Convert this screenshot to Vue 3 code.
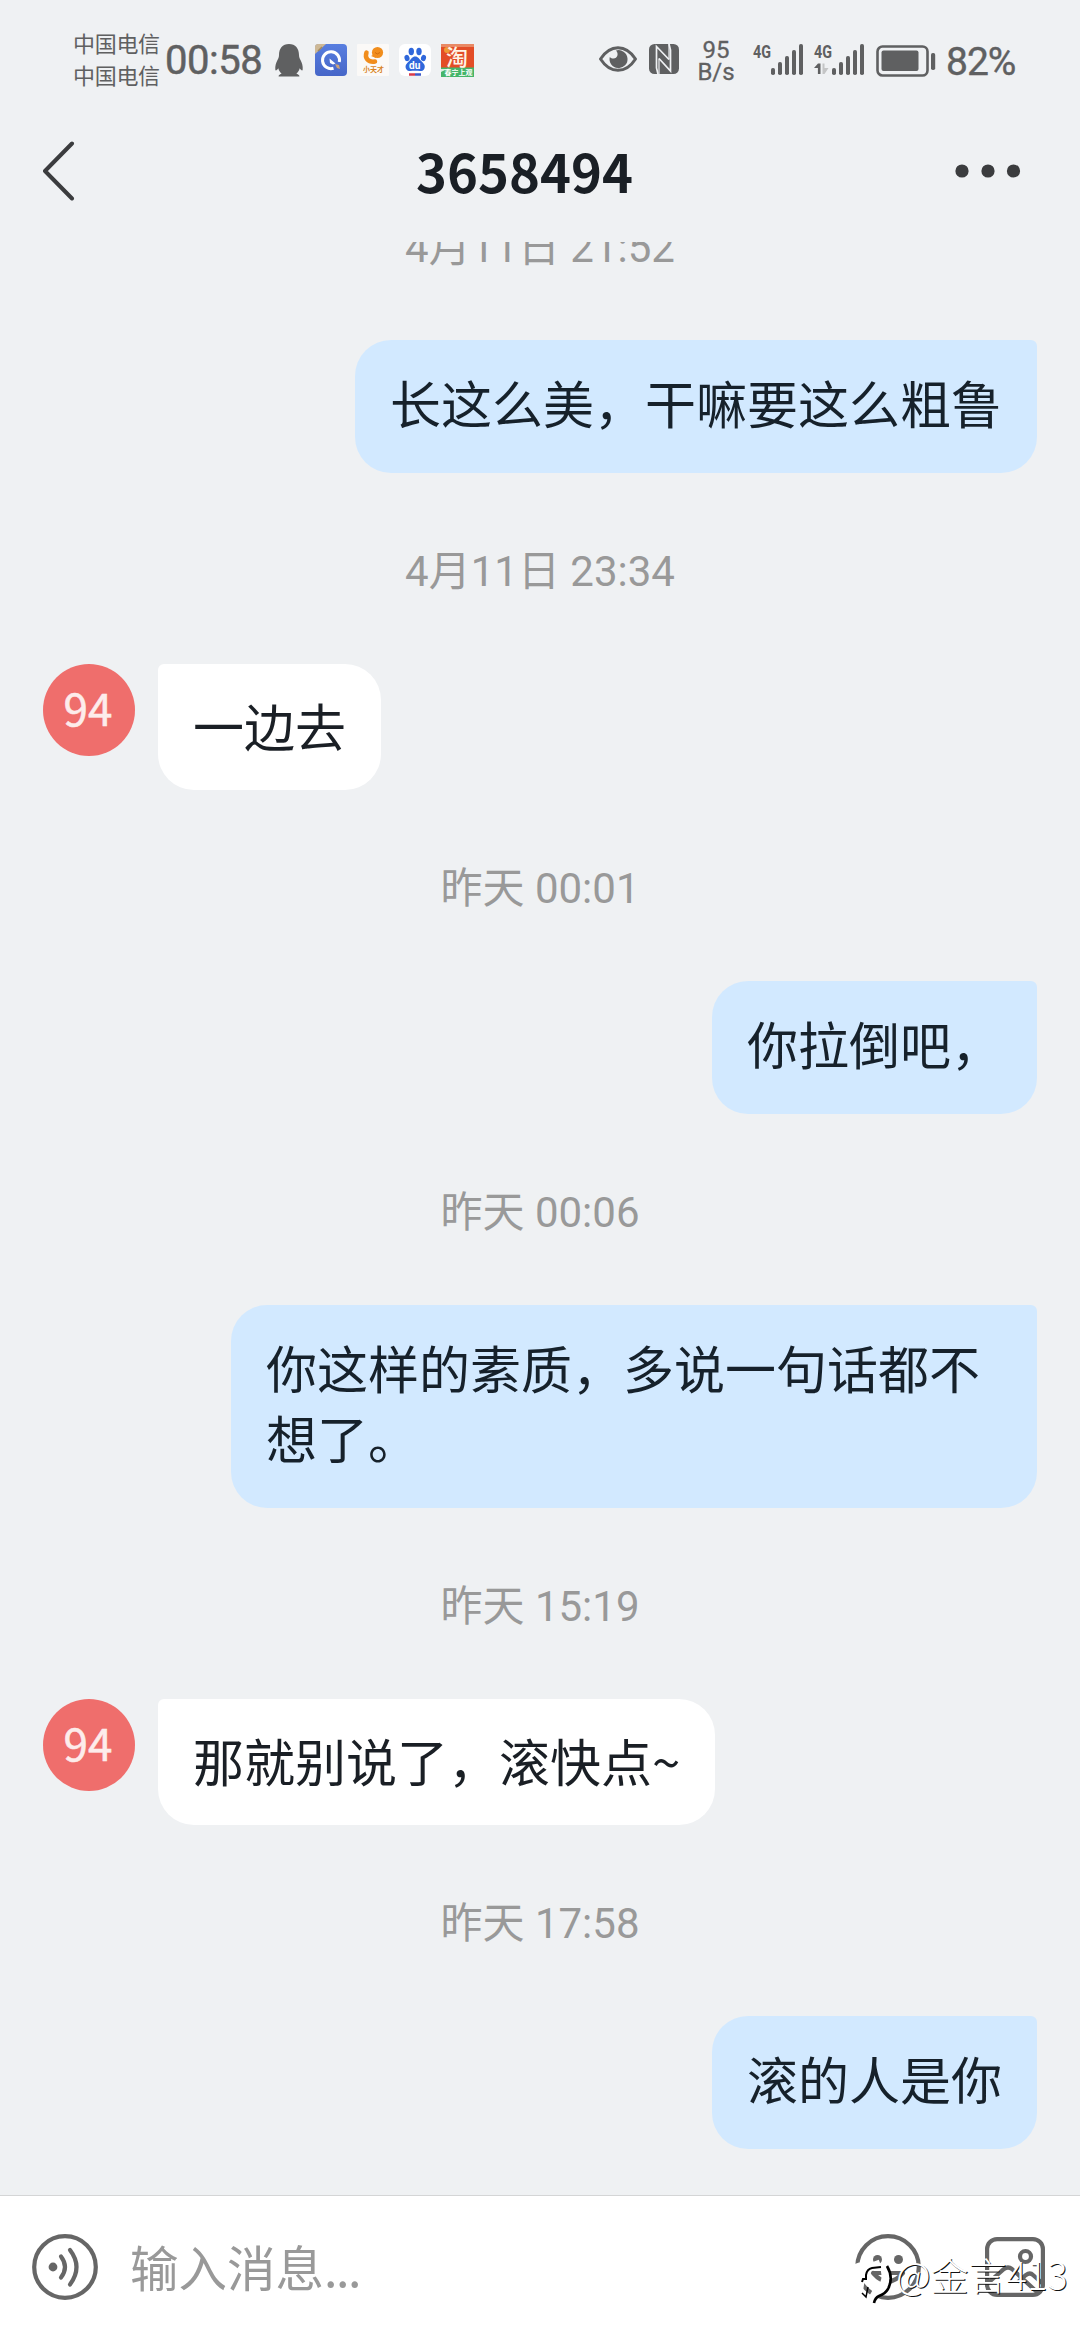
<script setup>
const messages = [
  { time: '4月11日 21:52', side: 'me', text: '长这么美，干嘛要这么粗鲁' },
  { time: '4月11日 23:34', side: 'peer', text: '一边去' },
  { time: '昨天 00:01', side: 'me', text: '你拉倒吧，' },
  { time: '昨天 00:06', side: 'me', text: '你这样的素质，多说一句话都不想了。' },
  { time: '昨天 15:19', side: 'peer', text: '那就别说了，滚快点~' },
  { time: '昨天 17:58', side: 'me', text: '滚的人是你' },
]
const bars = [0, 1, 2, 3, 4]
</script>

<template>
  <div class="phone" lang="zh-CN">
    <div class="status">
      <div class="carriers"><span>中国电信</span><span>中国电信</span></div>
      <span class="clock">00:58</span>
      <svg class="penguin" width="28" height="34" viewBox="0 0 28 34" fill="#5f6061">
        <path d="M14 0C7.500 0 4 4.500 4 11c0 2-.5 3-1.500 5C1 19 0 22 .3 25.500c.2 2 1.600.8 3-1.200.6 2.400 1.700 4 3.300 5.500-2.200.7-3 1.500-3 2.700h10.400h10.400c0-1.200-.8-2-3-2.700 1.600-1.500 2.700-3.100 3.300-5.500 1.400 2 2.800 3.200 3 1.200.3-3.500-.7-6.500-2.200-9.500-1-2-1.500-3-1.500-5C24 4.500 20.500 0 14 0z" />
      </svg>
      <div class="apps">
        <svg width="32" height="32" viewBox="0 0 32 32">
          <defs><linearGradient id="qb" x2="0" y2="1"><stop stop-color="#587ee0" /><stop offset="1" stop-color="#4666c8" /></linearGradient></defs>
          <rect width="32" height="32" rx="4" fill="url(#qb)" />
          <path d="M0 10V3q0-3 3-3h8z" fill="#cdb896" />
          <path d="M3 7l4-4" stroke="#a58958" stroke-width="1.500" />
          <path d="M18.500 24.300A8.500 8.500 0 1 1 24.300 18" fill="none" stroke="#fff" stroke-width="3" />
          <path d="M14.500 14.500l6 5-2.500 1-3-1.500z" fill="#fff" />
          <path d="M20 20l4 1 1 4-3-1z" fill="#c9a27c" />
        </svg>
        <svg width="32" height="32" viewBox="0 0 32 32">
          <rect width="32" height="32" rx="1" fill="#fbf9f7" />
          <circle cx="20.500" cy="8.500" r="5.600" fill="#f18d1c" />
          <path d="M9.500 8.500C7.500 14 11 18.500 18 17.500" fill="none" stroke="#f18d1c" stroke-width="4.500" stroke-linecap="round" />
          <path d="M14 12l4-2 1 4z" fill="#f18d1c" />
          <path d="M18 8.500q2 3 5 0" fill="none" stroke="#d36d0d" />
          <text x="6" y="28" font-size="7" font-weight="700" fill="#d98424">小天才</text>
        </svg>
        <svg width="32" height="32" viewBox="0 0 32 32">
          <rect width="32" height="32" rx="6" fill="#fff" />
          <g fill="#2f67db">
            <ellipse cx="12.300" cy="7.500" rx="2.700" ry="3.700" /><ellipse cx="20" cy="7.500" rx="2.700" ry="3.700" />
            <ellipse cx="8" cy="14" rx="2.500" ry="3.200" transform="rotate(-15 8 14)" /><ellipse cx="24.500" cy="14" rx="2.500" ry="3.200" transform="rotate(15 24.500 14)" />
            <path d="M16.200 12.500c-3 0-4 2.500-6 4.500-3 2.600-4.500 5-3 8 1.500 3 5 1.800 9 1.800s7.500 1.200 9-1.800c1.500-3 0-5.400-3-8-2-2-3-4.500-6-4.500z" />
          </g>
          <text x="10" y="25" font-size="10" font-weight="700" fill="#fff" class="latin">du</text>
          <path d="M10 30.500h6" stroke="#d93a4a" stroke-width="2.500" /><path d="M16 30.500h6" stroke="#3f5bc9" stroke-width="2.500" />
        </svg>
        <svg width="33" height="33" viewBox="0 0 33 33">
          <rect width="33" height="33" rx="1" fill="#e34d27" />
          <path d="M0 0h33v3H0z" fill="#e98964" />
          <circle cx="6" cy="6" r="3" fill="#ef9a35" />
          <path d="M0 23.500h33V33H0z" fill="#45b56a" />
          <path d="M0 25h6l-6 3z" fill="#d8efdd" />
          <text x="5" y="20.500" font-size="22" font-weight="500" fill="#fff4e6">淘</text>
          <text x="3.500" y="31" font-size="7" font-weight="700" fill="#fff">春宁上观</text>
        </svg>
      </div>

      <svg class="eye" width="38" height="26" viewBox="0 0 38 26">
        <path d="M1.500 13C6 6 12 1.700 19 1.700S32 6 36.500 13C32 20 26 24.300 19 24.300S6 20 1.500 13z" fill="none" stroke="#5f6061" stroke-width="3" stroke-linejoin="round" />
        <path d="M17 4.500c3 3 1.500 8-2.500 8-1.500 0-2.600-.5-3.700-1.500A9 9 0 1 0 17 4.500z" fill="#5f6061" />
      </svg>
      <svg class="nfc" width="30" height="30" viewBox="0 0 30 30">
        <rect width="30" height="30" rx="5.500" fill="#5f6061" />
        <path d="M9 30L7.500 24V2.500L20 15.500M20 0l1.500 6v21L10 14.500" fill="none" stroke="#eff1f3" stroke-width="1.700" />
        <path d="M10 14.500V30M20 15.500V0" fill="none" stroke="#eff1f3" stroke-width="1.200" />
      </svg>
      <div class="speed"><span>95</span><span>B/s</span></div>
      <svg class="sig" width="52" height="34" viewBox="0 0 52 34" fill="#5f6061">
        <text x="0" y="14.500" class="net" textLength="18" lengthAdjust="spacingAndGlyphs">4G</text>
        <rect v-for="i in bars" :key="i" :x="18 + i * 7" :y="25 - i * 6" width="4" :height="7 + i * 6" rx="1.800" />
      </svg>
      <svg class="sig two" width="52" height="34" viewBox="0 0 52 34" fill="#5f6061">
        <text x="0" y="14.500" class="net" textLength="18" lengthAdjust="spacingAndGlyphs">4G</text>
        <path d="M6.500 31h-2.600v-6H0l4-4.500h2.500z" />
        <path d="M8.500 20.500h2V25h4l-4 6h-2z" fill="#c4c5c6" />
        <rect v-for="i in bars" :key="i" :x="18 + i * 7" :y="25 - i * 6" width="4" :height="7 + i * 6" rx="1.800" />
      </svg>
      <svg class="battery" width="60" height="33" viewBox="0 0 60 33">
        <rect x="1.500" y="1.500" width="50" height="29" rx="5" fill="none" stroke="#5f6061" stroke-width="2.600" />
        <rect x="5.500" y="5.500" width="37" height="20.500" rx="2" fill="#5f6061" />
        <rect x="55" y="8" width="4.200" height="17" rx="1.800" fill="#5f6061" />
      </svg>
      <span class="percent">82%</span>
    </div>

    <header class="head">
      <svg width="34" height="60" viewBox="0 0 34 60"><path d="M30 2.500L3 30l27 27.500" fill="none" stroke="#3b3c3e" stroke-width="4" stroke-linecap="round" stroke-linejoin="round" /></svg>
      <h1>3658494</h1>
      <svg width="66" height="14" viewBox="0 0 66 14" fill="#3b3c3e"><circle cx="7" cy="7" r="6.600" /><circle cx="33" cy="7" r="6.600" /><circle cx="58.500" cy="7" r="6.600" /></svg>
    </header>

    <main class="chat">
      <template v-for="m in messages" :key="m.time">
        <div class="time">{{ m.time }}</div>
        <div class="row" :class="m.side">
          <div v-if="m.side === 'peer'" class="avatar">94</div>
          <div class="bubble">{{ m.text }}</div>
        </div>
      </template>
    </main>

    <footer class="bar">
      <svg width="66" height="66" viewBox="0 0 66 66" fill="none" stroke="#666" stroke-width="4.200" stroke-linecap="round">
        <circle cx="33" cy="33" r="30.800" /><circle cx="21" cy="33" r="4.400" fill="#666" stroke="none" />
        <path d="M29 22.500q8 10.500 0 21M38 16q13 17 0 34.500" />
      </svg>
      <div class="placeholder">输入消息<span>...</span></div>
      <svg class="smile" width="66" height="66" viewBox="0 0 66 66" fill="none" stroke="#666" stroke-width="4.200" stroke-linecap="round">
        <circle cx="33" cy="33" r="30.800" /><g fill="#666" stroke="none"><circle cx="22.500" cy="25.500" r="4.500" /><circle cx="43.500" cy="25.500" r="4.500" /></g>
        <path d="M18 39q15 17 30 0M18 39h30" />
      </svg>
      <svg class="photo" width="60" height="60" viewBox="0 0 60 60" fill="none" stroke="#666" stroke-width="4.200" stroke-linecap="round">
        <rect x="2.100" y="2.100" width="55.800" height="55.800" rx="10" /><circle cx="40.500" cy="19.500" r="5.500" />
        <path d="M3 46l16-14q4-3 8 0l25 23M34 44l7-6q4-3 7 0l9 8" />
      </svg>
      <div class="mark">
        <svg width="44" height="60" viewBox="0 0 44 60" fill="none">
          <g stroke="#fff"><path d="M3 17l5 14-2 13" stroke-width="10" /><path d="M7 34l5-12 16-6" stroke-width="7" /><path d="M31 18q8 18-8 29l-4 7" stroke-width="8" /></g>
          <g stroke="#000"><path d="M10 35l1-3h3v-4q1-6 6-7l9-1" stroke-width="2" /><path d="M10 46l4 4 2-10" stroke-width="1.500" /><path d="M35 19q7 12 1 23-3 5-9 7-4 2-5 7" stroke-width="2.600" /></g>
        </svg>
        <span>@金言413</span>
      </div>
    </footer>
  </div>
</template>

<style>
body { margin: 0; background: #eff1f3; }
</style>

<style scoped>
.phone {
  width: 1080px; height: 2340px; overflow: hidden;
  display: flex; flex-direction: column;
  background: #eff1f3;
  font-family: "Noto Sans CJK SC", sans-serif;
  color: #1a1f25;
}
.status { height: 120px; flex: none; display: flex; align-items: flex-start; padding-left: 73px; color: #5f6061; box-sizing: border-box; }
.status svg { flex: none; overflow: visible; }
.carriers { display: flex; flex-direction: column; width: 92px; padding-top: 26px; font-size: 22px; line-height: 32px; letter-spacing: -0.3px; white-space: nowrap; }
.clock { width: 110px; margin-top: 37px; font: 40px/48px Roboto, sans-serif; -webkit-text-stroke: .5px; letter-spacing: -.5px; }
.penguin { margin-top: 44px; }
.apps { display: flex; gap: 10px; margin: 44px 0 0 12px; width: 158px; }
.latin { font-family: Roboto, sans-serif; }
.eye { margin: 46px 0 0 126px; }
.nfc { margin: 44px 0 0 12px; }
.speed { display: flex; flex-direction: column; width: 50px; margin: 39px 0 0 12px; text-align: center; font: 24px/22px Roboto, sans-serif; -webkit-text-stroke: .3px; }
.sig { margin: 43px 0 0 12px; }
.sig.two { margin-left: 9px; }
.net { font: 700 19px Roboto, sans-serif; }
.battery { margin: 45px 0 0 10px; }
.percent { margin: 39px 0 0 10px; font: 39px/46px Roboto, sans-serif; letter-spacing: -1px; -webkit-text-stroke: .4px; }

.head { height: 122px; flex: none; display: flex; align-items: flex-start; justify-content: space-between; padding: 0 59px 0 42px; box-sizing: border-box; }
.head svg:first-child { margin-top: 21px; width: 34px; margin-right: 32px; }
.head svg:last-child { margin-top: 44px; }
.head h1 { margin: 0 14px 0 0; font-size: 52.500px; line-height: 100px; font-weight: 700; }

.chat { height: 1953px; flex: none; overflow: hidden; display: flex; flex-direction: column; justify-content: flex-end; padding-bottom: 46px; box-sizing: border-box; }
.time { height: 191px; flex: none; line-height: 197px; text-align: center; font-family: Roboto, "Noto Sans CJK SC", sans-serif; font-size: 42px; color: #999; }
.row { flex: none; display: flex; align-items: flex-start; gap: 23px; padding: 0 43px; }
.row.me { justify-content: flex-end; }
.bubble { box-sizing: border-box; max-width: 806px; font-size: 51px; line-height: 70px; padding: 27px 35px 36px; background: #d2e9ff; border-radius: 36px 6px 36px 36px; color: #16212b; }
.peer .bubble { background: #fff; border-radius: 6px 36px 36px 36px; padding: 26px 35px 30px; color: #1a1f25; }
.avatar { box-sizing: border-box; width: 92px; height: 92px; flex: none; padding-right: 2px; border-radius: 50%; background: #ef6e6c; color: #fdeceb; font-size: 44px; line-height: 87px; text-align: center; -webkit-text-stroke: .5px; }

.bar { position: relative; height: 145px; flex: none; box-sizing: border-box; border-top: 1px solid #d4d5d6; background: #fff; display: flex; align-items: flex-start; padding-left: 32px; }
.bar > svg { flex: none; margin-top: 38px; }
.placeholder { width: 725px; margin-left: 32px; margin-top: 35px; font-size: 48.500px; line-height: 70px; color: #999; white-space: nowrap; }
.placeholder span { letter-spacing: -1.500px; }
.bar .photo { margin: 41px 0 0 64px; }
.mark { position: absolute; left: 852px; top: 51px; display: flex; align-items: flex-start; color: #fff; white-space: nowrap; }
.mark span { font-size: 38px; line-height: 54px; font-weight: 300; text-shadow: 1px 1px 0 #111; }
</style>
